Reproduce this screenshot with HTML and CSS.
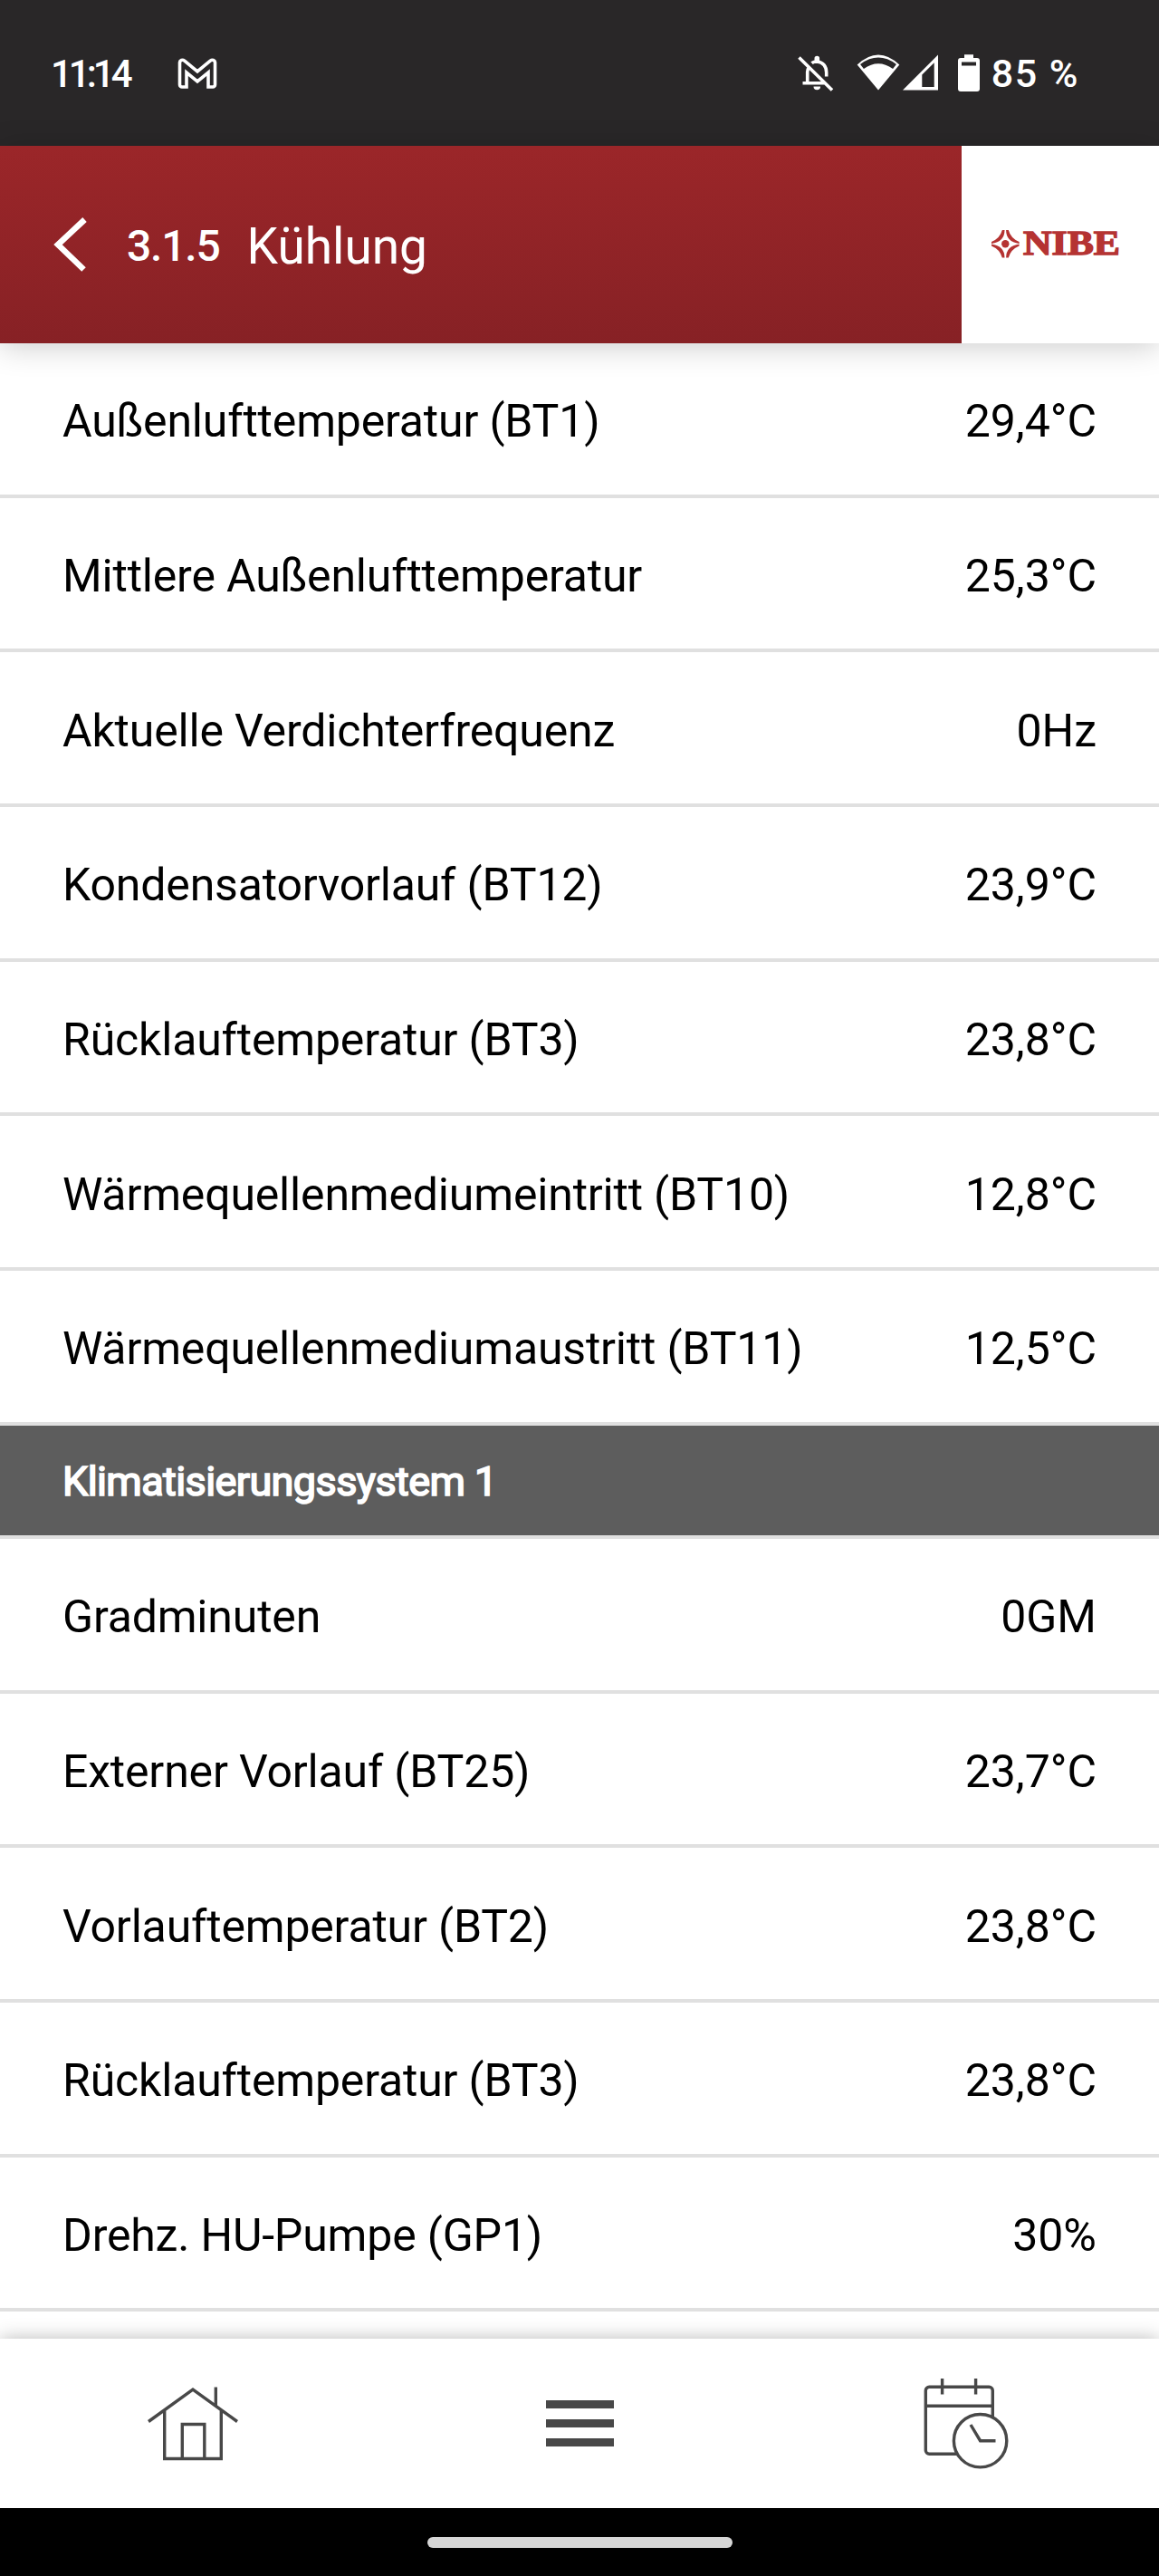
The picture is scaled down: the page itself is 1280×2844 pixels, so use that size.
FILE: index.html
```html
<!DOCTYPE html>
<html lang="de">
  <head>
    <meta charset="UTF-8" />
    <meta name="viewport" content="width=device-width, initial-scale=1.0" />
    <title>3.1.5 Kühlung</title>
    <link rel="stylesheet" href="styles.css">
  </head>
  <body>
    <div class="status-bar">
      <span class="time">11:14</span>
      <svg class="gmail" width="46" height="36" viewBox="0 0 46 36">
        <path d="M6 33a2.500 2.500 0 0 1-2.500-2.500V6a3 3 0 0 1 5-2L23 16 37.500 4a3 3 0 0 1 5 2v24.500A2.500 2.500 0 0 1 40 33h-5V17L23 27 11 17v16z" />
      </svg>
      <div class="status-icons">
        <svg class="bell" width="42" height="42" viewBox="0 0 42 42">
          <path d="M2.500 3.500 39 39.500M6.500 31.700H32M11.700 31V19.500q0-3 1.800-5.500M16.500 9.700q2-1.700 6-1.700 10 1.500 10.200 12v4.500" />
          <path class="solid" d="M19.500 8V4.500a2.800 2.800 0 0 1 5.600 0V8zM18.500 35.500h7.600a3.800 3.800 0 0 1-7.600 0z" />
        </svg>
        <svg class="wifi" width="50" height="42" viewBox="0 0 50 42">
          <path class="solid" d="M1.700 11.500Q25-10.500 48.300 11.500L25 39.500z" />
          <path class="gap" d="M7 13.500Q25 .2 43 13.500" />
        </svg>
        <svg class="signal" width="42" height="42" viewBox="0 0 42 42">
          <path class="solid" fill-rule="evenodd" d="M2 39.500 41 .5v39zM23.300 22.500V36h13.400V9.300z" />
        </svg>
        <svg class="battery" width="26" height="42" viewBox="0 0 26 42">
          <path class="solid" fill-rule="evenodd" d="M8 .3h10V4h4a3 3 0 0 1 3 3v31a3 3 0 0 1-3 3H4a3 3 0 0 1-3-3V7a3 3 0 0 1 3-3h4zM5 8.500v4h16v-4z" />
        </svg>
        <span class="percent">85 %</span>
      </div>
    </div>

    <div class="header">
      <div class="title-bar">
        <svg class="back" width="38" height="60" viewBox="0 0 38 60">
          <path d="M34.500 2.500 5 30l28.500 27.500" />
        </svg>
        <span class="number">3.1.5</span>
        <h1>Kühlung</h1>
      </div>
      <div class="brand">
        <svg width="142" height="36" viewBox="0 0 142 36">
          <circle cx="16.300" cy="17.200" r="4.200" />
          <path d="M15.500 2Q15.500 15 1 17V15Q10.500 11 12.800 2z" />
          <path d="M17.100 2Q17.100 15 31.600 17V15Q22.100 11 19.800 2z" />
          <path d="M15.500 32.500Q15.500 19.500 1 17.500V19.500Q10.500 23.500 12.800 32.500z" />
          <path d="M17.100 32.500Q17.100 19.500 31.600 17.500V19.500Q22.100 23.500 19.800 32.500z" />
          <text x="36" y="29.200" textLength="107" lengthAdjust="spacingAndGlyphs">NIBE</text>
        </svg>
      </div>
    </div>

    <div class="content">
      <div class="row"><span>Außenlufttemperatur (BT1)</span><span>29,4°C</span></div>
      <div class="row"><span>Mittlere Außenlufttemperatur</span><span>25,3°C</span></div>
      <div class="row"><span>Aktuelle Verdichterfrequenz</span><span>0Hz</span></div>
      <div class="row"><span>Kondensatorvorlauf (BT12)</span><span>23,9°C</span></div>
      <div class="row"><span>Rücklauftemperatur (BT3)</span><span>23,8°C</span></div>
      <div class="row"><span>Wärmequellenmediumeintritt (BT10)</span><span>12,8°C</span></div>
      <div class="row"><span>Wärmequellenmediumaustritt (BT11)</span><span>12,5°C</span></div>
      <h2>Klimatisierungssystem 1</h2>
      <div class="row"><span>Gradminuten</span><span>0GM</span></div>
      <div class="row"><span>Externer Vorlauf (BT25)</span><span>23,7°C</span></div>
      <div class="row"><span>Vorlauftemperatur (BT2)</span><span>23,8°C</span></div>
      <div class="row"><span>Rücklauftemperatur (BT3)</span><span>23,8°C</span></div>
      <div class="row"><span>Drehz. HU-Pumpe (GP1)</span><span>30%</span></div>
    </div>

    <div class="tabs">
      <a class="tab">
        <svg width="100" height="82" viewBox="0 0 100 82">
          <path d="M1 38.500 50 3l49 35.500M18.700 25.500v54h62.600v-54M38.300 79.500v-38h24.500v38M75.300 .5v20.500" />
        </svg>
      </a>
      <a class="tab">
        <div class="menu"><i></i><i></i><i></i></div>
      </a>
      <a class="tab">
        <svg width="96" height="102" viewBox="0 0 96 102">
          <path d="M38 84.300H7.300a4 4 0 0 1-4-4v-66a4 4 0 0 1 4-4h66a4 4 0 0 1 4 4V43.500M3.300 31.300h74M21.600 1v17.500M58.600 1v17.500" />
          <circle cx="63.600" cy="69.700" r="29.200" />
          <path d="M53 52 63.600 69.700H80.500" />
        </svg>
      </a>
    </div>
    <div class="gesture-bar"><div class="pill"></div></div>
  </body>
</html>
```

FILE: styles.css
```css
* {
  box-sizing: border-box;
}
body {
  margin: 0;
  height: 2844px;
  display: flex;
  flex-direction: column;
  overflow: hidden;
  background-color: #fff;
  color: #000;
  font-family: Roboto, sans-serif;
  font-size: 50px;
}
svg {
  display: block;
  flex: none;
  overflow: visible;
}

.status-bar {
  height: 161px;
  flex: none;
  display: flex;
  align-items: center;
  padding: 1px 88px 0 56px;
  background-color: #292728;
  color: #fff;
  font-size: 42px;
  font-weight: 500;
}
.status-bar svg {
  fill: none;
  stroke: #fff;
  stroke-width: 3.6;
}
.status-bar .solid {
  fill: #fff;
  stroke: none;
}
.status-bar .gap {
  stroke: #292728;
  stroke-width: 6.5;
}
.time {
  width: 139px;
  letter-spacing: -4px;
}
.status-icons {
  display: flex;
  align-items: center;
  margin-left: auto;
}
.bell {
  margin-right: 23px;
}
.battery {
  margin: 0 12px 0 20px;
}
.percent {
  font-size: 43px;
  letter-spacing: 1.5px;
}

.header {
  height: 218px;
  flex: none;
  display: flex;
  position: relative;
  z-index: 1;
  box-shadow: 0 4px 32px rgba(0, 0, 0, 0.2);
}
.title-bar {
  flex: 1;
  display: flex;
  align-items: center;
  padding-left: 59px;
  background: linear-gradient(#9b2629, #872125);
  color: #fff;
}
.back {
  fill: none;
  stroke: #fff;
  stroke-width: 6.5;
}
.number {
  margin: 2px 0 0 43px;
  font-size: 48px;
  font-weight: 500;
  letter-spacing: -1.2px;
}
h1 {
  margin: 4px 0 0 30px;
  font-size: 55px;
  font-weight: 400;
}
.brand {
  width: 218px;
  display: flex;
  align-items: center;
  padding-left: 32px;
  background-color: #fff;
}
.brand svg {
  fill: #b53332;
}
.brand text {
  font-family: "Liberation Serif", serif;
  font-size: 38px;
  font-weight: bold;
  stroke: #b53332;
  stroke-width: 1.4;
}

.content {
  flex: 1;
  min-height: 0;
}
.row {
  height: 170.67px;
  display: flex;
  align-items: center;
  justify-content: space-between;
  padding: 6px 69px 0;
  border-bottom: 4px solid #e0e0e0;
}
.row span:first-child {
  letter-spacing: -0.18px;
}
h2 {
  height: 125.33px;
  margin: 0;
  display: flex;
  align-items: center;
  padding: 2px 69px 0;
  border-bottom: 4px solid #e0e0e0;
  background-color: #5d5d5d;
  color: #fff;
  font-size: 45px;
  font-weight: 400;
  letter-spacing: -0.6px;
  -webkit-text-stroke: 1.7px #fff;
}

.tabs {
  height: 187px;
  flex: none;
  display: flex;
  position: relative;
  background-color: #fff;
  box-shadow: 0 0 20px rgba(0, 0, 0, 0.28);
}
.tab {
  flex: 1;
  display: flex;
  align-items: center;
  justify-content: center;
}
.tab svg {
  fill: none;
  stroke: #484848;
  stroke-width: 3.4;
}
.menu {
  display: flex;
  flex-direction: column;
  gap: 12px;
}
.menu i {
  width: 75px;
  height: 9px;
  background-color: #484848;
}
.gesture-bar {
  height: 75px;
  flex: none;
  display: flex;
  align-items: center;
  justify-content: center;
  position: relative;
  background-color: #000;
}
.pill {
  width: 337px;
  height: 12px;
  border-radius: 6px;
  background-color: #d6d6d6;
}
```
